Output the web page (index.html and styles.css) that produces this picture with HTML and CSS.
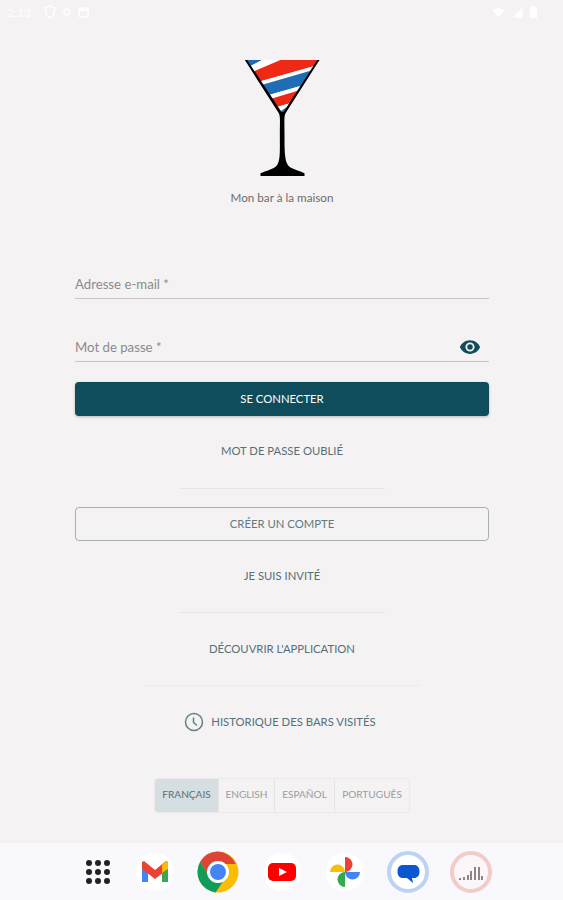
FILE: index.html
```html
<!DOCTYPE html>
<html lang="fr">
<head>
    <meta charset="UTF-8">
    <meta name="viewport" content="width=device-width, initial-scale=1.0">
    <title>Mon bar à la maison</title>
    <link rel="stylesheet" href="styles.css">
</head>

<body>

    <div class="status-bar">
        <div class="status-left">
            <span class="status-time">2:13</span>
            <svg width="12" height="14" viewBox="0 0 12 14"><path d="M6 1l4.500 1.800v4c0 3-2 5-4.500 6-2.500-1-4.500-3-4.500-6v-4z" fill="none" stroke="#fff" stroke-width="1.500"/></svg>
            <svg width="8" height="10" viewBox="0 0 8 10"><circle cx="4" cy="5" r="3" fill="none" stroke="#fff" stroke-width="1.500"/></svg>
            <svg width="11" height="12" viewBox="0 0 11 12"><rect x="1" y="2" width="9" height="9" rx="2" fill="none" stroke="#fff" stroke-width="1.500"/><path d="M1 3h9v2H1z" fill="#fff"/></svg>
        </div>
        <div class="status-right">
            <svg width="13" height="11" viewBox="0 0 13 11"><path d="M0.500 3.500C4 0 9 0 12.500 3.500L6.500 10.500z" fill="#fff"/></svg>
            <svg width="11" height="11" viewBox="0 0 11 11"><path d="M10.500 0.500v10h-10z" fill="#fff"/></svg>
            <svg width="7" height="12" viewBox="0 0 7 12"><path d="M2 0h3v1.500h2V12H0V1.500h2z" fill="#fff"/></svg>
        </div>
    </div>

    <main class="login">
        <svg class="logo" width="76" height="120" viewBox="130.500 24 228 360">
            <polygon points="135,30 185,30 150,48" fill="#1f6db5"/>
            <polygon points="185,30 240,30 158,65 150,48" fill="#fff"/>
            <polygon points="240,30 355,30 342,48 175,95 158,65" fill="#ee2a16"/>
            <polygon points="342,48 330,62 183,105 175,95" fill="#fff"/>
            <polygon points="330,62 300,108 205,135 183,105" fill="#1f6db5"/>
            <polygon points="300,108 292,122 212,146 205,135" fill="#fff"/>
            <polygon points="292,122 268,160 232,170 212,146" fill="#ee2a16"/>
            <polygon points="268,160 258,172 240,184 232,170" fill="#fff"/>
            <polygon points="258,172 245,196 240,184" fill="#1f6db5"/>
            <path d="M133 30L140 30L243 186L249 186L350 30L357 30L255 190C250 200 252 220 252 250C252 300 252 330 262 345C270 358 300 362 312 370L312 378L180 378L180 370C195 362 222 358 230 345C240 330 238 300 238 250C238 220 240 200 235 190z" fill="#000"/>
        </svg>
        <div class="tagline">Mon bar à la maison</div>

        <div class="field field-email"><span>Adresse e-mail *</span></div>
        <div class="field field-password">
            <span>Mot de passe *</span>
            <svg class="eye" width="22" height="22" viewBox="0 0 24 24"><path d="M12 4.500C7 4.500 2.700 7.600 1 12c1.700 4.400 6 7.500 11 7.500s9.300-3.100 11-7.500c-1.700-4.400-6-7.500-11-7.500zM12 17a5 5 0 1 1 0-10 5 5 0 0 1 0 10zm0-8a3 3 0 1 0 0 6 3 3 0 0 0 0-6z" fill="#0f4c5c"/></svg>
        </div>

        <button class="btn-primary" type="button">SE CONNECTER</button>
        <div class="link link-forgot">MOT DE PASSE OUBLIÉ</div>
        <div class="divider divider-first"></div>
        <button class="btn-outline" type="button">CRÉER UN COMPTE</button>
        <div class="link link-guest">JE SUIS INVITÉ</div>
        <div class="divider divider-second"></div>
        <div class="link link-discover">DÉCOUVRIR L'APPLICATION</div>
        <div class="divider divider-wide"></div>
        <div class="link link-history">
            <svg width="20" height="20" viewBox="0 0 20 20"><circle cx="10" cy="10" r="8.500" fill="none" stroke="#5f8088" stroke-width="1.500"/><path d="M9.500 5.500v5l3.500 3" fill="none" stroke="#5f8088" stroke-width="1.500"/></svg>
            HISTORIQUE DES BARS VISITÉS
        </div>

        <div class="languages">
            <div class="lang lang-fr active">FRANÇAIS</div>
            <div class="lang lang-en">ENGLISH</div>
            <div class="lang lang-es">ESPAÑOL</div>
            <div class="lang lang-pt">PORTUGUÊS</div>
        </div>
    </main>

    <nav class="dock">
        <svg class="dock-icon dock-apps" width="42" height="42" viewBox="0 0 42 42">
            <g fill="#222">
                <circle cx="12" cy="12" r="3"/><circle cx="21" cy="12" r="3"/><circle cx="30" cy="12" r="3"/>
                <circle cx="12" cy="21" r="3"/><circle cx="21" cy="21" r="3"/><circle cx="30" cy="21" r="3"/>
                <circle cx="12" cy="30" r="3"/><circle cx="21" cy="30" r="3"/><circle cx="30" cy="30" r="3"/>
            </g>
        </svg>
        <svg class="dock-icon" width="42" height="42" viewBox="0 0 42 42">
            <circle cx="21" cy="21" r="19" fill="#fff"/>
            <path d="M8 14v17h6V19z" fill="#4285f4"/>
            <path d="M28 19v12h6V14z" fill="#34a853"/>
            <path d="M8 11v7l13 10 13-10v-7l-2-1-11 9-11-9z" fill="#ea4335"/>
            <path d="M28 14l3-3c1-1 3-.5 3 1.500V18l-6 4z" fill="#fbbc04"/>
        </svg>
        <svg class="dock-icon" width="42" height="42" viewBox="0 0 42 42">
            <circle cx="21" cy="21" r="20.500" fill="#fbbc04"/>
            <path d="M21 .5A20.500 20.500 0 0 0 3.200 10.800L13 27 21 13h17.800A20.500 20.500 0 0 0 21 .5z" fill="#db4437"/>
            <path d="M3.200 10.800A20.500 20.500 0 0 0 18.600 41.400L27 29 13 27z" fill="#0f9d58"/>
            <circle cx="21" cy="21" r="11" fill="#fff"/>
            <circle cx="21" cy="21" r="8" fill="#4285f4"/>
        </svg>
        <svg class="dock-icon" width="42" height="42" viewBox="0 0 42 42">
            <circle cx="21" cy="21" r="19" fill="#fff"/>
            <rect x="7" y="12" width="28" height="18" rx="5" fill="#f00"/>
            <path d="M18 17l8 4-8 4z" fill="#fff"/>
        </svg>
        <svg class="dock-icon" width="42" height="42" viewBox="0 0 42 42">
            <circle cx="21" cy="21" r="19" fill="#fff"/>
            <path d="M21 21V6a7.500 7.500 0 0 1 0 15z" fill="#ea4335"/>
            <path d="M21 21h15a7.500 7.500 0 0 1-15 0z" fill="#4285f4"/>
            <path d="M21 21v15a7.500 7.500 0 0 1 0-15z" fill="#34a853"/>
            <path d="M21 21H6a7.500 7.500 0 0 1 15 0z" fill="#fbbc04"/>
        </svg>
        <svg class="dock-icon" width="42" height="42" viewBox="0 0 42 42">
            <circle cx="21" cy="21" r="19" fill="#fff" stroke="#bcd3f4" stroke-width="4"/>
            <path d="M16 14h11c3.500 0 5.500 2.500 5.500 6.500S30.500 27 27 27h-2l1 5-6-5h-4c-3.500 0-5.500-2.500-5.500-6.500S12.500 14 16 14z" fill="#0b57d0"/>
        </svg>
        <svg class="dock-icon" width="42" height="42" viewBox="0 0 42 42">
            <circle cx="21" cy="21" r="19" fill="#fbf7f8" stroke="#f3cbc8" stroke-width="4"/>
            <path d="M10 29v-2M14 29v-3M18 29v-5M21 29v-9M25 29v-13M29 29v-13M32 29v-4" stroke="#8f8589" stroke-width="2" fill="none"/>
        </svg>
    </nav>

</body>
</html>
```

FILE: styles.css
```css
* {
    box-sizing: border-box;
}
body {
    font-family: Lato, "Open Sans", sans-serif;
    background-color: #f4f2f3;
    margin: 0;
    height: 900px;
    display: flex;
    flex-direction: column;
    overflow: hidden;
}
.status-bar {
    height: 24px;
    padding: 0 26px 0 7px;
    display: flex;
    justify-content: space-between;
    align-items: center;
}
.status-left, .status-right {
    display: flex;
    align-items: center;
    gap: 7px;
}
.status-time {
    color: #fff;
    font-size: 12px;
    margin-right: 6px;
}
.login {
    flex: 1;
    padding: 0 74px 0 75px;
    display: flex;
    flex-direction: column;
    align-items: center;
}
.logo {
    margin-top: 34px;
    flex-shrink: 0;
}
.tagline {
    margin-top: 12px;
    height: 16px;
    line-height: 14px;
    font-size: 11.700px;
    color: #6d6d6d;
}
.field {
    width: 100%;
    height: 32px;
    padding-top: 2px;
    border-bottom: 1.500px solid #c6c6c8;
    display: flex;
    align-items: center;
    justify-content: space-between;
    font-size: 13.200px;
    color: #8b8b8d;
}
.field-email {
    margin-top: 61px;
}
.field-password {
    margin-top: 31px;
}
.eye {
    margin-right: 8px;
}
button {
    font-family: inherit;
    width: 100%;
    height: 34px;
    padding: 0 0 2px;
    border-radius: 4px;
    font-size: 11.300px;
    cursor: pointer;
}
.btn-primary {
    margin-top: 20px;
    flex-shrink: 0;
    background-color: #0f4c5c;
    color: #fff;
    border: none;
    box-shadow: 0 1px 3px rgba(0, 0, 0, 0.25);
}
.btn-outline {
    margin-top: 18px;
    flex-shrink: 0;
    background-color: transparent;
    color: #5f7c84;
    border: 1.500px solid #a9adae;
}
.link {
    height: 20px;
    line-height: 18px;
    font-size: 11.300px;
    color: #557078;
}
.link-forgot {
    margin-top: 26px;
}
.link-guest {
    margin-top: 26px;
}
.link-discover {
    margin-top: 27px;
}
.divider {
    height: 1px;
    background-color: #e6e5e6;
    width: 205px;
}
.divider-first {
    margin-top: 26px;
}
.divider-second {
    margin-top: 25px;
}
.divider-wide {
    margin-top: 25px;
    width: 275px;
    background-color: #ecebec;
}
.link-history {
    margin-top: 26px;
    display: flex;
    align-items: center;
    gap: 7px;
    margin-left: -4px;
}
.languages {
    margin-top: 46px;
    display: flex;
    height: 35px;
    width: 256px;
    border: 1px solid #ebeaeb;
    border-radius: 4px;
    overflow: hidden;
    flex-shrink: 0;
}
.lang {
    display: flex;
    align-items: center;
    justify-content: center;
    padding-bottom: 3px;
    font-size: 10.100px;
    color: #9a9d9e;
    border-left: 1px solid #e6e5e6;
}
.lang-fr {
    width: 63px;
    border-left: none;
}
.lang-en {
    width: 56px;
}
.lang-es {
    width: 60px;
}
.lang-pt {
    flex: 1;
}
.lang.active {
    background-color: #d5dee1;
    color: #557078;
}
.dock {
    height: 57px;
    flex-shrink: 0;
    background-color: #f9f8fc;
    padding-left: 77px;
    display: flex;
    align-items: center;
    gap: 21.200px;
}
.dock-icon {
    flex-shrink: 0;
}
.dock-apps {
    margin-right: -6px;
}
```
